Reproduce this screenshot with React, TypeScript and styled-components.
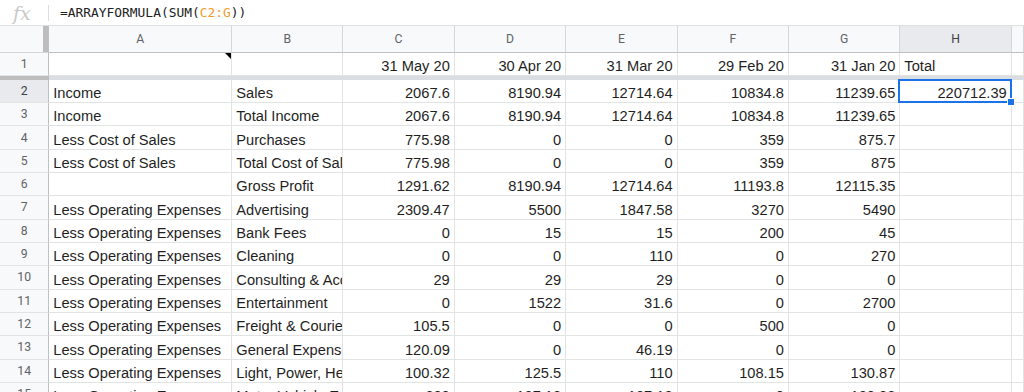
import React from "react";
import styled, { createGlobalStyle, css } from "styled-components";

const GlobalStyle = createGlobalStyle`
    body {
        margin: 0;
        background: #fff;
        font-family: "Liberation Sans", Arial, sans-serif;
    }
`;

const HEADER_BORDER = "#d4d6d8";
const GRID_LINE = "#e2e3e3";

const Page = styled.div`
    width: 1024px;
    height: 392px;
    overflow: hidden;
    background: #fff;
`;

const FormulaBar = styled.div`
    display: flex;
    align-items: center;
    height: 26px;
    border-bottom: 1px solid #e0e0e0;
    box-sizing: border-box;
`;

const FxIcon = styled.span`
    width: 48px;
    padding-left: 13px;
    box-sizing: border-box;
    font-family: "DejaVu Serif", "Liberation Serif", serif;
    font-style: italic;
    font-size: 19px;
    color: #c8c8c8;
    line-height: 24px;
`;

const Divider = styled.span`
    width: 1px;
    height: 16px;
    background: #dadce0;
`;

const FormulaText = styled.span`
    padding-left: 11px;
    font-family: "DejaVu Sans Mono", "Liberation Mono", monospace;
    font-size: 12.9px;
    color: #222;
`;

const RangeRef = styled.span`
    color: #f29b2c;
`;

const Sheet = styled.div`
    display: grid;
    grid-template-columns: 49.3px 183px 111.1px repeat(6, 111.4px) 1fr;
    grid-template-rows: 27px 23.3px 3.4px repeat(14, 23.33px);
`;

const headerBase = css`
    box-sizing: border-box;
    display: flex;
    align-items: center;
    justify-content: center;
    font-family: Roboto, "Liberation Sans", sans-serif;
    font-size: 12.2px;
    color: #5f6368;
    border-right: 1px solid ${HEADER_BORDER};
    border-bottom: 1px solid ${HEADER_BORDER};
`;

const Corner = styled.div`
    ${headerBase};
    justify-content: flex-end;
    background: #f8f9fa;
    border-right: 1px solid #c0c0c0;
`;

const FreezeHandle = styled.span`
    width: 5px;
    height: 100%;
    background: #bdbdbd;
`;

const ColHeader = styled.div<{ $selected?: boolean }>`
    ${headerBase};
    background: ${(p) => (p.$selected ? "#e8eaed" : "#f8f9fa")};
    color: ${(p) => (p.$selected ? "#3c4043" : "#5f6368")};
    border-bottom-color: #c0c0c0;
`;

const RowHeader = styled.div<{ $selected?: boolean }>`
    ${headerBase};
    background: ${(p) => (p.$selected ? "#e8eaed" : "#f8f9fa")};
    color: ${(p) => (p.$selected ? "#3c4043" : "#5f6368")};
    border-right-color: #c0c0c0;
    border-bottom-color: ${GRID_LINE};
`;

const FreezeCorner = styled.div`
    background: #bdbdbd;
`;

const FreezeLine = styled.div`
    grid-column: 2 / -1;
    background: #dadde2;
`;

const Cell = styled.div<{ $align?: "left" | "right" }>`
    box-sizing: border-box;
    display: flex;
    align-items: flex-end;
    justify-content: ${(p) => (p.$align === "right" ? "flex-end" : "flex-start")};
    padding: 0 4px 0 4px;
    border-right: 1px solid ${GRID_LINE};
    border-bottom: 1px solid ${GRID_LINE};
    font-size: 14.67px;
    color: #1f1f1f;
    white-space: nowrap;
    overflow: hidden;
    min-width: 0;
`;

const CellText = styled.span`
    line-height: 17px;
`;

const NoteCell = styled(Cell)`
    position: relative;
`;

const NoteMark = styled.span`
    position: absolute;
    top: 0;
    right: 0;
    width: 0;
    height: 0;
    border-top: 6px solid #000;
    border-left: 6px solid transparent;
`;

const SelectedCell = styled(Cell)`
    position: relative;
    z-index: 2;
    overflow: visible;
`;

const Selection = styled.span`
    position: absolute;
    left: -2px;
    top: -1px;
    right: -1px;
    bottom: -1px;
    border: 2px solid #1a73e8;
    pointer-events: none;
`;

const FillHandle = styled.span`
    position: absolute;
    right: -4px;
    bottom: -4px;
    width: 6px;
    height: 6px;
    background: #1a73e8;
    border: 1px solid #fff;
`;

const columns = ["A", "B", "C", "D", "E", "F", "G", "H", ""];

type Row = [string, string, string, string, string, string, string];

const dates = ["31 May 20", "30 Apr 20", "31 Mar 20", "29 Feb 20", "31 Jan 20"];

const LOE = "Less Operating Expenses";

const rows: Row[] = [
    ["Income", "Sales", "2067.6", "8190.94", "12714.64", "10834.8", "11239.65"],
    ["Income", "Total Income", "2067.6", "8190.94", "12714.64", "10834.8", "11239.65"],
    ["Less Cost of Sales", "Purchases", "775.98", "0", "0", "359", "875.7"],
    ["Less Cost of Sales", "Total Cost of Sales", "775.98", "0", "0", "359", "875"],
    ["", "Gross Profit", "1291.62", "8190.94", "12714.64", "11193.8", "12115.35"],
    [LOE, "Advertising", "2309.47", "5500", "1847.58", "3270", "5490"],
    [LOE, "Bank Fees", "0", "15", "15", "200", "45"],
    [LOE, "Cleaning", "0", "0", "110", "0", "270"],
    [LOE, "Consulting & Accounting", "29", "29", "29", "0", "0"],
    [LOE, "Entertainment", "0", "1522", "31.6", "0", "2700"],
    [LOE, "Freight & Courier", "105.5", "0", "0", "500", "0"],
    [LOE, "General Expenses", "120.09", "0", "46.19", "0", "0"],
    [LOE, "Light, Power, Heating", "100.32", "125.5", "110", "108.15", "130.87"],
    [LOE, "Motor Vehicle Expenses", "600", "137.13", "137.13", "0", "130.88"],
];

export default function App(): React.ReactElement {
    return (
        <Page>
            <GlobalStyle />
            <FormulaBar>
                <FxIcon>fx</FxIcon>
                <Divider />
                <FormulaText>
                    =ARRAYFORMULA(SUM(<RangeRef>C2:G</RangeRef>))
                </FormulaText>
            </FormulaBar>
            <Sheet>
                <Corner>
                    <FreezeHandle />
                </Corner>
                {columns.map((c, i) => (
                    <ColHeader key={i} $selected={c === "H"}>
                        {c}
                    </ColHeader>
                ))}

                <RowHeader>1</RowHeader>
                <NoteCell>
                    <NoteMark />
                </NoteCell>
                <Cell />
                {dates.map((d) => (
                    <Cell key={d} $align="right">
                        <CellText>{d}</CellText>
                    </Cell>
                ))}
                <Cell>
                    <CellText>Total</CellText>
                </Cell>
                <Cell />

                <FreezeCorner />
                <FreezeLine />

                {rows.map((r, i) => {
                    const num = i + 2;
                    return (
                        <React.Fragment key={num}>
                            <RowHeader $selected={num === 2}>{num}</RowHeader>
                            <Cell>
                                <CellText>{r[0]}</CellText>
                            </Cell>
                            <Cell>
                                <CellText>{r[1]}</CellText>
                            </Cell>
                            {r.slice(2).map((v, j) => (
                                <Cell key={j} $align="right">
                                    <CellText>{v}</CellText>
                                </Cell>
                            ))}
                            {num === 2 ? (
                                <SelectedCell $align="right">
                                    <CellText>220712.39</CellText>
                                    <Selection />
                                    <FillHandle />
                                </SelectedCell>
                            ) : (
                                <Cell />
                            )}
                            <Cell />
                        </React.Fragment>
                    );
                })}
            </Sheet>
        </Page>
    );
}
